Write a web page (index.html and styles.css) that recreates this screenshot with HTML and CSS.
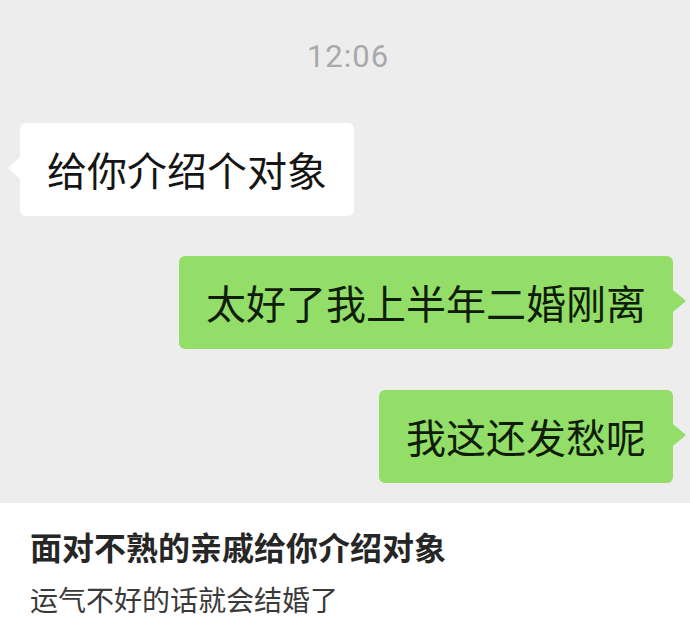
FILE: index.html
```html
<!DOCTYPE html>
<html>
<head>
	<meta charset="utf-8">
	<title>给你介绍个对象</title>
	<link rel="stylesheet" href="styles.css">
</head>
<body>
	<main>
		<div class="chat">
			<div class="time">12:06</div>
			<div class="row left">
				<div class="bubble white">给你介绍个对象</div>
			</div>
			<div class="row right">
				<div class="bubble green">太好了我上半年二婚刚离</div>
			</div>
			<div class="row right">
				<div class="bubble green">我这还发愁呢</div>
			</div>
		</div>
		<div class="caption">
			<h3>面对不熟的亲戚给你介绍对象</h3>
			<p>运气不好的话就会结婚了</p>
		</div>
	</main>
</body>
</html>
```

FILE: styles.css
```css
body{margin: 0;background-color: #fff;font-family: "Noto Sans CJK SC", sans-serif;}
main{width: 690px;height: 619px;}
.chat{background-color: #ededed;height: 503px;box-sizing: border-box;padding: 39px 17px 0 20px;display: flex;flex-direction: column;}
.time{font-family: Roboto, "Liberation Sans", sans-serif;font-size: 31px;line-height: 36px;letter-spacing: 1px;color: #a9a9a9;text-align: center;margin-left: 3px;}
.row{display: flex;}
.row.left{justify-content: flex-start;margin-top: 48px;}
.row.right{justify-content: flex-end;margin-top: 40px;}
.row.right + .row.right{margin-top: 41px;}
.bubble{position: relative;font-size: 40px;line-height: 52px;padding: 20px 27px 21px;border-radius: 6px;color: #151515;}
.bubble::before{content: "";position: absolute;top: 34px;border-top: 11px solid transparent;border-bottom: 11px solid transparent;}
.white{background-color: #fff;}
.white::before{left: -12px;border-right: 12px solid #fff;}
.green{background-color: #93de68;color: #0e1c08;}
.green::before{right: -13px;border-left: 13px solid #93de68;}
.caption{padding: 23px 30px 0;}
.caption h3{margin: 0;font-size: 32px;line-height: 40px;font-weight: bold;color: #262626;}
.caption p{margin: 14px 0 0;font-size: 28px;line-height: 38px;color: #3a3a3a;}
```
